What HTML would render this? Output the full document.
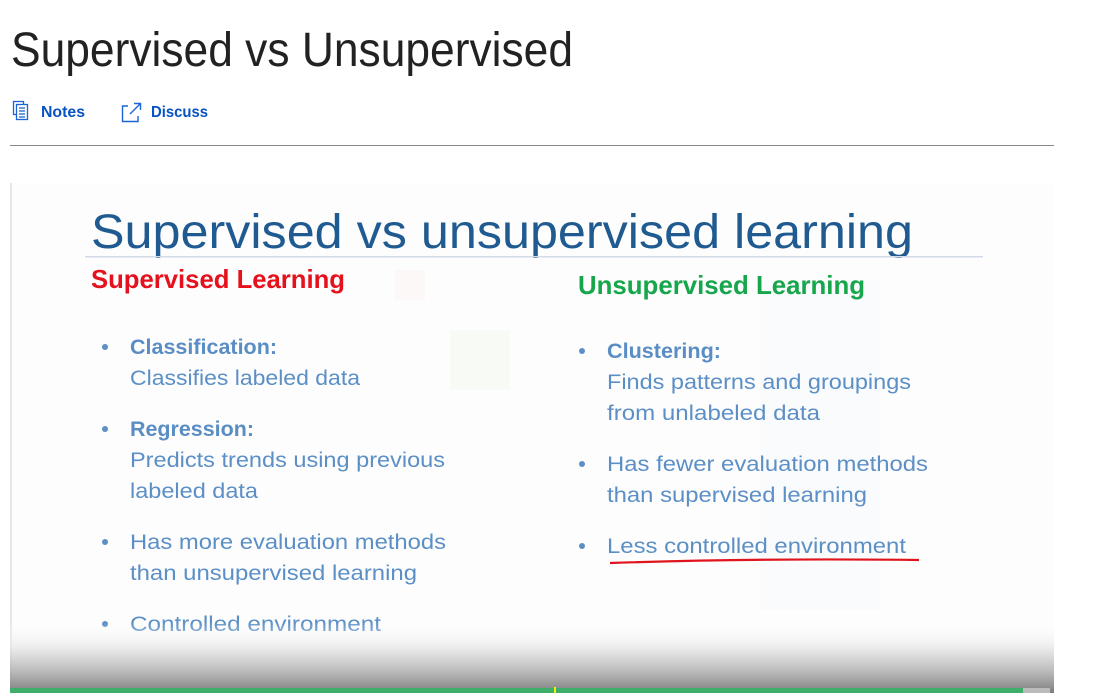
<!DOCTYPE html>
<html><head><meta charset="utf-8"><style>
html,body{margin:0;padding:0;background:#fff;width:1103px;height:693px;overflow:hidden}
svg{display:block}
.b{font-family:"Liberation Sans",sans-serif;fill:#5b8fc6;font-size:21px}
.bb{font-family:"Liberation Sans",sans-serif;fill:#5a8dc4;font-size:21px;font-weight:bold}
</style></head><body>
<svg width="1103" height="693" viewBox="0 0 1103 693" xmlns="http://www.w3.org/2000/svg">
<defs>
<linearGradient id="g" x1="0" y1="0" x2="0" y2="1">
<stop offset="0" stop-color="#fff" stop-opacity="0"/>
<stop offset="0.35" stop-color="#e6e6e6" stop-opacity="0.7"/>
<stop offset="1" stop-color="#7d7d7d"/>
</linearGradient>
</defs>
<text x="11" y="66" font-family="Liberation Sans,sans-serif" font-size="48" fill="#222" textLength="562" lengthAdjust="spacingAndGlyphs">Supervised vs Unsupervised</text>
<g fill="none" stroke="#1a64d6" stroke-width="1.3">
<rect x="13.5" y="101.5" width="10" height="13"/>
<rect x="16.5" y="104.5" width="11" height="15" fill="#fff"/>
<line x1="19" y1="108" x2="25" y2="108"/><line x1="19" y1="111" x2="25" y2="111"/><line x1="19" y1="114" x2="25" y2="114"/><line x1="19" y1="117" x2="25" y2="117"/>
</g>
<text x="41" y="117" font-family="Liberation Sans,sans-serif" font-weight="bold" font-size="16" fill="#0753c4" textLength="44" lengthAdjust="spacingAndGlyphs">Notes</text>
<g fill="none" stroke="#1a64d6" stroke-width="1.4">
<path d="M128 106 H122.5 V121.5 H138 V116"/>
<path d="M130 114 L140 104 M134 103.5 H140.5 V110" />
</g>
<text x="151" y="117" font-family="Liberation Sans,sans-serif" font-weight="bold" font-size="16" fill="#0753c4" textLength="57" lengthAdjust="spacingAndGlyphs">Discuss</text>
<rect x="10" y="145" width="1044" height="1" fill="#8a8a8a"/>
<rect x="10" y="183" width="1044" height="510" fill="#fdfdfd"/>
<rect x="10" y="183" width="2" height="510" fill="#e6e6e6"/>
<rect x="450" y="330" width="60" height="60" fill="#f8faf5"/>
<rect x="395" y="270" width="30" height="30" fill="#fdf8f8"/>
<rect x="760" y="280" width="120" height="330" fill="#fafbfc"/>
<text x="91" y="248" font-family="Liberation Sans,sans-serif" font-size="48" fill="#1f5a90" textLength="822" lengthAdjust="spacingAndGlyphs">Supervised vs unsupervised learning</text>
<rect x="85" y="256" width="898" height="1.5" fill="#d4dbe8"/>
<text x="91" y="288" font-family="Liberation Sans,sans-serif" font-weight="bold" font-size="26" fill="#e5111c" textLength="254" lengthAdjust="spacingAndGlyphs">Supervised Learning</text>
<text x="578" y="294" font-family="Liberation Sans,sans-serif" font-weight="bold" font-size="26" fill="#17a64b" textLength="287" lengthAdjust="spacingAndGlyphs">Unsupervised Learning</text>
<g fill="#5b8fc6">
<circle cx="105" cy="347" r="3"/><circle cx="105" cy="429" r="3"/><circle cx="105" cy="542" r="3"/><circle cx="105" cy="624" r="3"/>
<circle cx="582" cy="351" r="3"/><circle cx="582" cy="464" r="3"/><circle cx="582" cy="546" r="3"/>
</g>
<text class="bb" x="130" y="354" textLength="147" lengthAdjust="spacingAndGlyphs">Classification:</text>
<text class="b" x="130" y="385" textLength="230" lengthAdjust="spacingAndGlyphs">Classifies labeled data</text>
<text class="bb" x="130" y="436" textLength="124" lengthAdjust="spacingAndGlyphs">Regression:</text>
<text class="b" x="130" y="467" textLength="315" lengthAdjust="spacingAndGlyphs">Predicts trends using previous</text>
<text class="b" x="130" y="498" textLength="128" lengthAdjust="spacingAndGlyphs">labeled data</text>
<text class="b" x="130" y="549" textLength="316" lengthAdjust="spacingAndGlyphs">Has more evaluation methods</text>
<text class="b" x="130" y="580" textLength="287" lengthAdjust="spacingAndGlyphs">than unsupervised learning</text>
<text class="b" x="130" y="631" textLength="251" lengthAdjust="spacingAndGlyphs">Controlled environment</text>
<text class="bb" x="607" y="358" textLength="114" lengthAdjust="spacingAndGlyphs">Clustering:</text>
<text class="b" x="607" y="389" textLength="304" lengthAdjust="spacingAndGlyphs">Finds patterns and groupings</text>
<text class="b" x="607" y="420" textLength="213" lengthAdjust="spacingAndGlyphs">from unlabeled data</text>
<text class="b" x="607" y="471" textLength="321" lengthAdjust="spacingAndGlyphs">Has fewer evaluation methods</text>
<text class="b" x="607" y="502" textLength="260" lengthAdjust="spacingAndGlyphs">than supervised learning</text>
<text class="b" x="607" y="553" textLength="299" lengthAdjust="spacingAndGlyphs">Less controlled environment</text>
<path d="M610 563 Q760 558 919 560" stroke="#e0141c" stroke-width="2.2" fill="none"/>
<rect x="10" y="622" width="1044" height="71" fill="url(#g)"/>
<rect x="10" y="688" width="1013" height="5" fill="#3fae6a"/>
<rect x="1023" y="688" width="27" height="5" fill="#bbb"/>
<rect x="554" y="687" width="2" height="6" fill="#f0f000"/>
</svg>
</body></html>
